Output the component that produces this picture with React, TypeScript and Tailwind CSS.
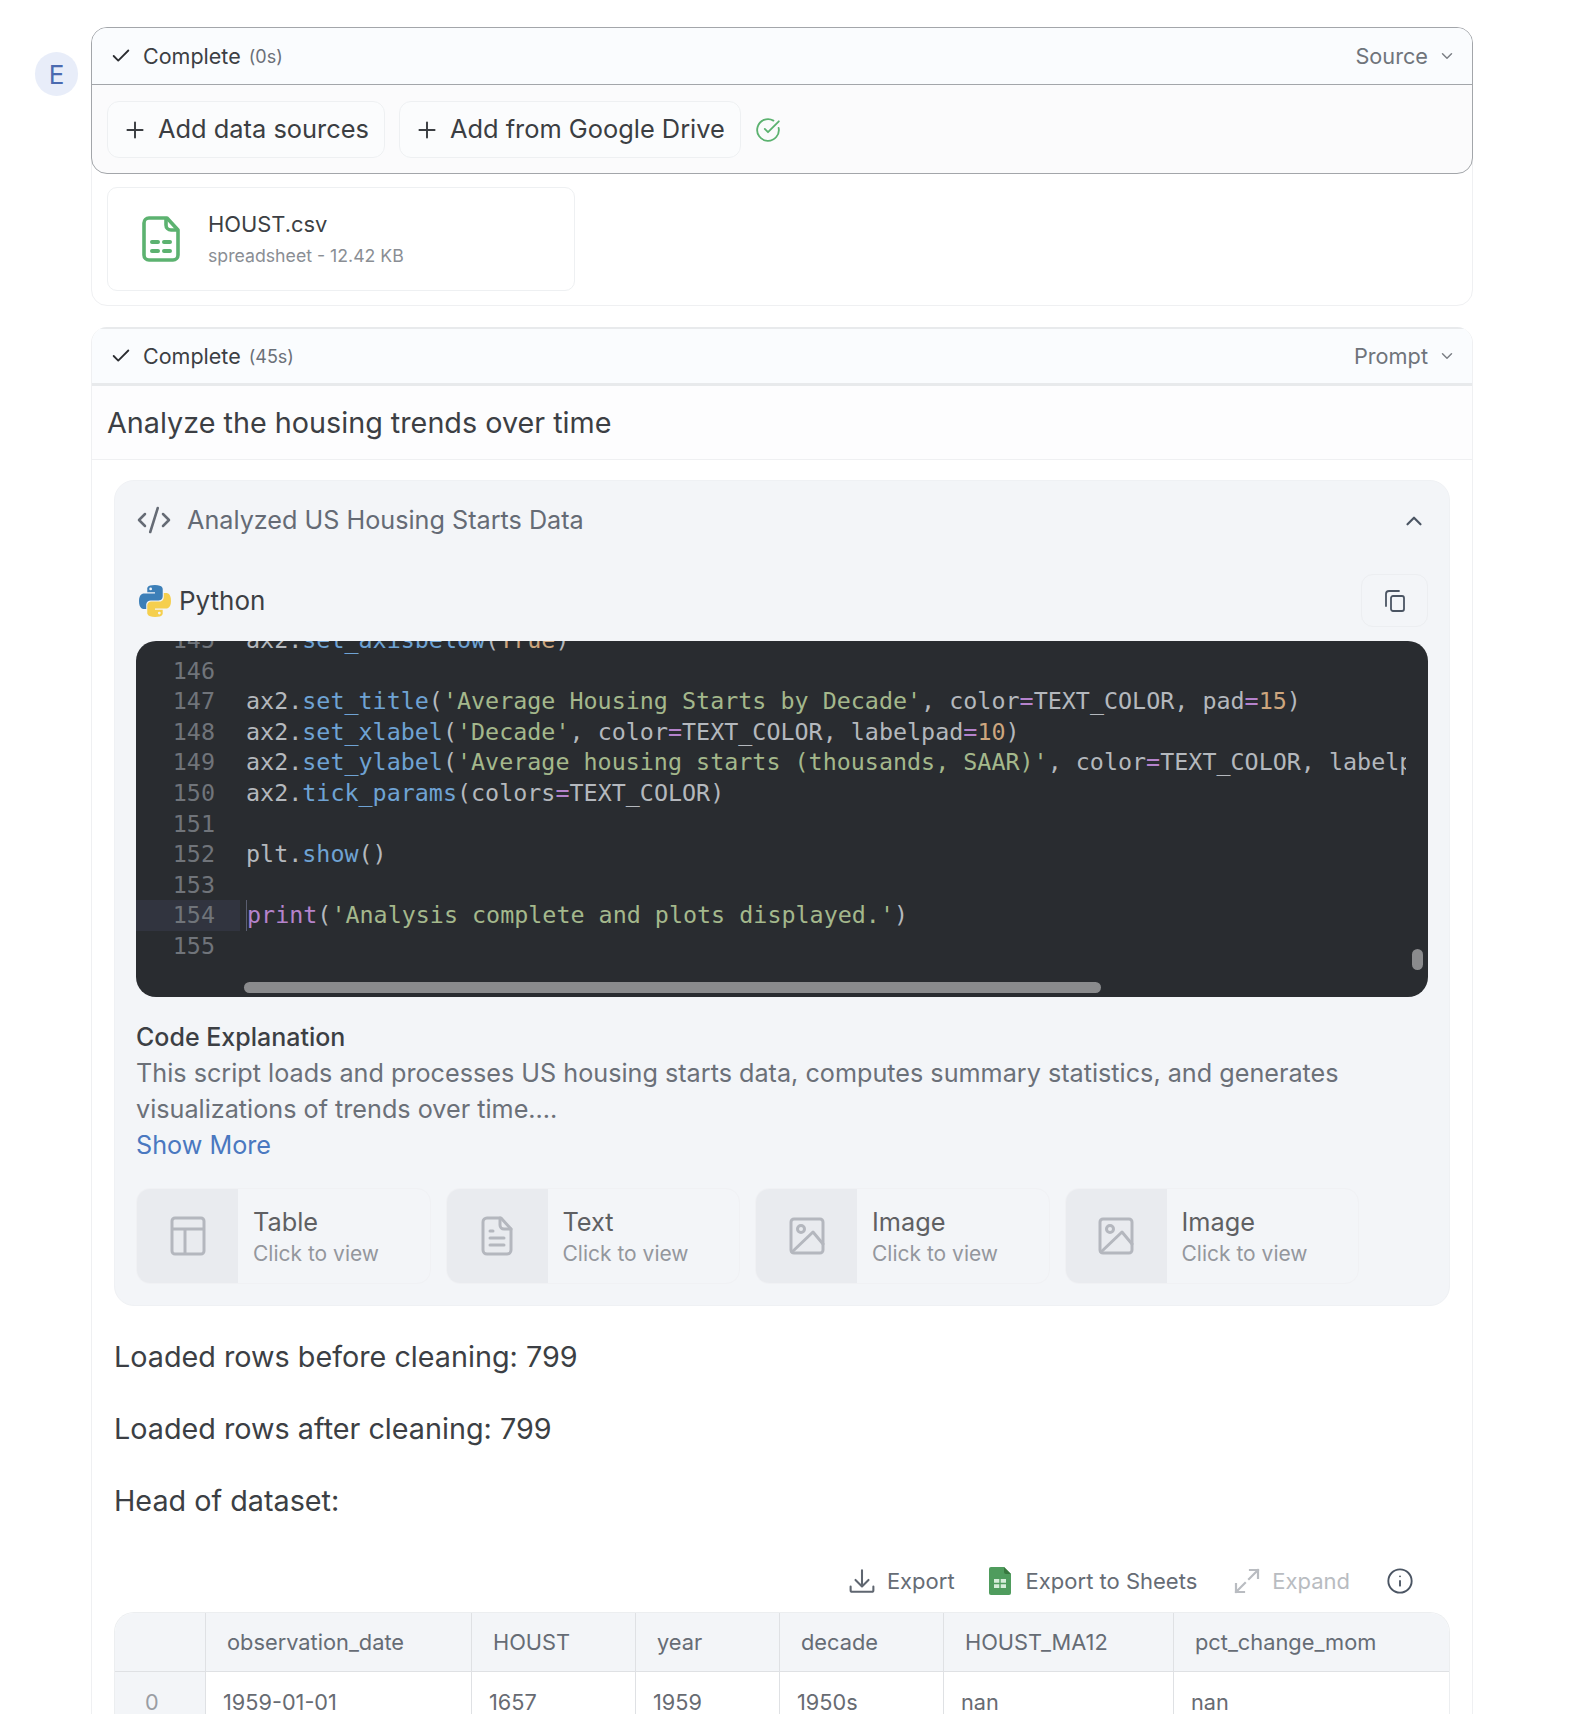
import { Check, ChevronDown, ChevronUp, CircleCheckBig, CodeXml, Info, Plus } from "lucide-react";
import type { ReactNode } from "react";

const ui = "font-['Inter',sans-serif]";

function Fn({ children }: { children: ReactNode }) {
    return <span className="text-[#6fa3d4]">{children}</span>;
}
function Str({ children }: { children: ReactNode }) {
    return <span className="text-[#a4b88c]">{children}</span>;
}
function Op({ children }: { children: ReactNode }) {
    return <span className="text-[#b583cc]">{children}</span>;
}
function Num({ children }: { children: ReactNode }) {
    return <span className="text-[#cda67e]">{children}</span>;
}

const lines: { n: number; code: ReactNode; active?: boolean }[] = [
    { n: 145, code: <>ax2.<Fn>set_axisbelow</Fn>(<Num>True</Num>)</> },
    { n: 146, code: null },
    { n: 147, code: <>ax2.<Fn>set_title</Fn>(<Str>'Average Housing Starts by Decade'</Str>, color<Op>=</Op>TEXT_COLOR, pad<Op>=</Op><Num>15</Num>)</> },
    { n: 148, code: <>ax2.<Fn>set_xlabel</Fn>(<Str>'Decade'</Str>, color<Op>=</Op>TEXT_COLOR, labelpad<Op>=</Op><Num>10</Num>)</> },
    { n: 149, code: <>ax2.<Fn>set_ylabel</Fn>(<Str>'Average housing starts (thousands, SAAR)'</Str>, color<Op>=</Op>TEXT_COLOR, labelpad<Op>=</Op><Num>10</Num>)</> },
    { n: 150, code: <>ax2.<Fn>tick_params</Fn>(colors<Op>=</Op>TEXT_COLOR)</> },
    { n: 151, code: null },
    { n: 152, code: <>plt.<Fn>show</Fn>()</> },
    { n: 153, code: null },
    { n: 154, code: <><Op>print</Op>(<Str>'Analysis complete and plots displayed.'</Str>)</>, active: true },
    { n: 155, code: null },
];

function CodeBlock() {
    return (
        <div className="relative mt-[14px] h-[356px] overflow-hidden rounded-[20px] bg-[#292c30] font-['DejaVu_Sans_Mono',monospace] text-[23.36px] text-[#b4b8bd]">
            <div className="-mt-[16px] flex">
                <div className="w-[104px] shrink-0 text-[#70747a]">
                    {lines.map((l) => (
                        <div key={l.n} className={`h-[30.6px] pr-[25px] text-right leading-[30.6px] ${l.active ? "bg-[#31343f]" : ""}`}>{l.n}</div>
                    ))}
                </div>
                <div className="ml-[6px] w-[1160px] overflow-hidden">
                    {lines.map((l) => (
                        <div key={l.n} className={`h-[30.6px] whitespace-pre leading-[30.6px] ${l.active ? "border-l border-[#5a5e70]" : ""}`}>{l.code}</div>
                    ))}
                </div>
            </div>
            <div className="absolute bottom-[4px] left-[108px] h-[11px] w-[857px] rounded-full bg-[#8a8b8d]" />
            <div className="absolute right-[5px] top-[308px] h-[21px] w-[11px] rounded-full bg-[#8a8b8d]" />
        </div>
    );
}

function PythonLogo() {
    return (
        <svg viewBox="2 2 28 28" className="h-[32px] w-[32px]">
            <path fill="#3c7fb8" d="M15.885 2.1c-7.1 0-6.651 3.07-6.651 3.07v3.19h6.752v1H6.545S2 8.8 2 16.005s4.013 6.912 4.013 6.912H8.33v-3.361s-.13-4.013 3.9-4.013h6.762s3.772.06 3.772-3.652V5.8s.572-3.712-6.842-3.712Zm-3.732 2.137a1.214 1.214 0 1 1-1.183 1.244v-.02a1.214 1.214 0 0 1 1.214-1.214Z" />
            <path fill="#f5cf4e" d="M16.085 29.91c7.1 0 6.651-3.08 6.651-3.08v-3.18h-6.751v-1h9.47S30 23.158 30 15.995s-4.013-6.912-4.013-6.912H23.67V12.4s.13 4.013-3.9 4.013h-6.765S9.234 16.356 9.234 20.068v6.142s-.573 3.7 6.851 3.7Zm3.732-2.147A1.214 1.214 0 1 1 21 26.519v.03a1.214 1.214 0 0 1-1.183 1.214Z" />
        </svg>
    );
}

function SheetFileIcon() {
    return (
        <svg viewBox="0 0 38 46" className="h-[46px] w-[38px]" fill="none" stroke="#5cb270" strokeWidth="3.6" strokeLinejoin="round">
            <path d="M7 2h18l11 12v25a5 5 0 0 1-5 5H7a5 5 0 0 1-5-5V7a5 5 0 0 1 5-5Z" />
            <path d="M24 2v7a5 5 0 0 0 5 5h7" />
            <path d="M10 26h6M22 26h6M10 35h6M22 35h6" strokeLinecap="round" strokeWidth="4" />
        </svg>
    );
}

function CopyIcon() {
    return (
        <svg viewBox="0 0 24 24" className="h-[24px] w-[24px]" fill="none" stroke="#4b5563" strokeWidth="1.8" strokeLinejoin="round" strokeLinecap="round">
            <rect x="8" y="7" width="13" height="15" rx="2" />
            <path d="M16 2H6a3 3 0 0 0-3 3v12" />
        </svg>
    );
}

function TableIcon() {
    return (
        <svg viewBox="0 0 36 40" className="h-[40px] w-[36px]" fill="none" stroke="#b4b7be" strokeWidth="3" strokeLinejoin="round">
            <rect x="2" y="2" width="32" height="36" rx="3" />
            <path d="M2 13h32M15 13v25" />
        </svg>
    );
}

function TextFileIcon() {
    return (
        <svg viewBox="0 0 32 40" className="h-[40px] w-[32px]" fill="none" stroke="#b4b7be" strokeWidth="3" strokeLinejoin="round" strokeLinecap="round">
            <path d="M6 2h14l10 11v21a4 4 0 0 1-4 4H6a4 4 0 0 1-4-4V6a4 4 0 0 1 4-4Z" />
            <path d="M19 2v7a4 4 0 0 0 4 4h7" />
            <path d="M9 15h3M9 22h14M9 29h14" />
        </svg>
    );
}

function ImageIcon() {
    return (
        <svg viewBox="0 0 36 38" className="h-[38px] w-[36px]" fill="none" stroke="#b4b7be" strokeWidth="3" strokeLinejoin="round" strokeLinecap="round">
            <rect x="2" y="2" width="32" height="34" rx="3" />
            <circle cx="12" cy="12" r="3.5" />
            <path d="M3 35 24 15l10 12" />
        </svg>
    );
}

function ExportIcon() {
    return (
        <svg viewBox="0 0 24 24" className="h-[26px] w-[26px]" fill="none" stroke="#5f6670" strokeWidth="1.9" strokeLinecap="round" strokeLinejoin="round">
            <path d="M12 2v14M6 11l6 6 6-6" />
            <path d="M1.5 17v3.5a1.5 1.5 0 0 0 1.5 1.5h18a1.5 1.5 0 0 0 1.5-1.5V17" />
        </svg>
    );
}

function SheetsIcon() {
    return (
        <svg viewBox="0 0 22 28" className="h-[28px] w-[22px]">
            <path fill="#4f9c5d" d="M2 0h13l7 7v19a2 2 0 0 1-2 2H2a2 2 0 0 1-2-2V2a2 2 0 0 1 2-2Z" />
            <path fill="#38783f" d="M15 0l7 7h-5a2 2 0 0 1-2-2Z" />
            <rect x="5" y="12" width="12" height="9" fill="#d6edd9" />
            <path stroke="#4f9c5d" strokeWidth="1.4" d="M11 12v9M5 16.5h12" />
        </svg>
    );
}

function ExpandIcon() {
    return (
        <svg viewBox="0 0 26 26" className="h-[26px] w-[26px]" fill="none" stroke="#b9bcc1" strokeWidth="2.2" strokeLinecap="square">
            <path d="M15 11l9-9M16 2h8v8" />
            <path d="M11 15l-9 9M2 16v8h8" />
        </svg>
    );
}

const outputs = [
    { label: "Table", icon: <TableIcon /> },
    { label: "Text", icon: <TextFileIcon /> },
    { label: "Image", icon: <ImageIcon /> },
    { label: "Image", icon: <ImageIcon /> },
];

function OutputCard({ label, icon }: { label: string; icon: ReactNode }) {
    return (
        <div className="flex h-[96px] w-[294.5px] overflow-hidden rounded-[14px] border border-[#f0f1f4]">
            <div className="flex w-[101px] shrink-0 items-center justify-center bg-[#e9ebef]">{icon}</div>
            <div className="flex flex-col justify-center pl-[15px] pt-[2px]">
                <div className="text-[25.3px] leading-[33px] text-[#5f6063]">{label}</div>
                <div className="text-[21px] leading-[31px] text-[#94979d]">Click to view</div>
            </div>
        </div>
    );
}

function StatusHeader({ time, right, strong }: { time: string; right: string; strong?: boolean }) {
    return (
        <div className={`flex items-center justify-between bg-[#fafcfe] pl-[18px] pr-[16px] ${strong ? "h-[57px] border-b border-[#a3a6aa]" : "box-content h-[54px] border-b-[3px] border-t-[2px] border-[#e8eaec]"}`}>
            <div className="flex items-center gap-[10px]">
                <Check className="h-[22px] w-[22px] text-[#2b2d31]" strokeWidth={2} />
                <span className="ml-[1px] text-[21.5px] text-[#3c3f44]">Complete</span>
                <span className="-ml-[2px] text-[18px] text-[#6b7078]">({time})</span>
            </div>
            <div className="flex items-center gap-[10px]">
                <span className="text-[21.7px] text-[#6f747b]">{right}</span>
                <ChevronDown className="h-[18px] w-[18px] text-[#7d8187]" strokeWidth={2} />
            </div>
        </div>
    );
}

function AddButton({ label }: { label: string }) {
    return (
        <button className="flex h-[57px] items-center gap-[10px] rounded-[12px] border border-[#eef0f2] bg-[#fbfcfd] pl-[14px] pr-[15px] text-[25.4px] text-[#3b3e42]">
            <Plus className="h-[26px] w-[26px]" strokeWidth={1.8} />
            {label}
        </button>
    );
}

const headers = ["", "observation_date", "HOUST", "year", "decade", "HOUST_MA12", "pct_change_mom"];
const row = ["0", "1959-01-01", "1657", "1959", "1950s", "nan", "nan"];

function DataTable() {
    return (
        <div className="mt-[11px] overflow-hidden rounded-t-[20px] border-x border-t border-[#eceef0]">
            <div className="grid h-[59px] grid-cols-[90px_266px_164px_144px_164px_230px_1fr] border-b border-[#dfe1e4] bg-[#f3f5f8] text-[21.8px] text-[#666c75]">
                {headers.map((h, i) => (
                    <div key={i} className={`flex items-center pl-[21px] ${i > 0 ? "border-l border-[#dfe1e4]" : ""}`}>{h}</div>
                ))}
            </div>
            <div className="grid h-[60px] grid-cols-[90px_266px_164px_144px_164px_230px_1fr] text-[21.7px] text-[#676b72]">
                {row.map((c, i) => (
                    <div key={i} className={`flex items-center ${i === 0 ? "bg-[#f3f5f8] pl-[30px] text-[#9a9da3]" : "border-l border-[#dfe1e4] pl-[17px]"}`}>{c}</div>
                ))}
            </div>
        </div>
    );
}

export default function App() {
    return (
        <div className={`h-[1714px] overflow-hidden bg-white ${ui}`}>
            <div className="flex items-start gap-[13px] pl-[35px] pt-[27px]">
                <div className="mt-[25px] flex h-[44px] w-[43px] shrink-0 items-center justify-center rounded-full bg-[#e8edf9] text-[26px] text-[#4a6ab0]">E</div>
                <div className="w-[1382px]">
                    <section className="h-[279px] rounded-[16px] border border-[#eff0f2]">
                        <div className="-m-px h-[147px] overflow-hidden rounded-[16px] border border-[#a3a6aa] bg-[#fbfbfc]">
                            <StatusHeader time="0s" right="Source" strong />
                            <div className="flex items-center gap-[14px] px-[15px] pt-[16px]">
                                <AddButton label="Add data sources" />
                                <AddButton label="Add from Google Drive" />
                                <CircleCheckBig className="h-[26px] w-[26px] text-[#5cb270]" strokeWidth={1.7} />
                            </div>
                        </div>
                        <div className="ml-[15px] mt-[14px] flex h-[104px] w-[468px] items-center rounded-[10px] border border-[#eef0f2] pl-[34px]">
                            <SheetFileIcon />
                            <div className="ml-[28px]">
                                <div className="text-[21.9px] leading-[30px] text-[#3c3f44]">HOUST.csv</div>
                                <div className="mt-[4px] text-[17.7px] leading-[26px] text-[#8a8e94]">spreadsheet - 12.42 KB</div>
                            </div>
                        </div>
                    </section>

                    <section className="mt-[21px] overflow-hidden rounded-t-[16px] border-x border-[#eff0f2]">
                        <StatusHeader time="45s" right="Prompt" />
                        <div className="flex h-[74px] items-center border-b border-[#eff0f2] bg-[#fdfdfe] pl-[15px] text-[28.75px] text-[#3c3f44]">
                            Analyze the housing trends over time
                        </div>
                        <div className="px-[22px] pt-[20px]">
                            <div className="rounded-[20px] border border-[#eff1f4] bg-[#f3f5f8] px-[21px] pb-[21px]">
                                <div className="flex h-[79px] items-center justify-between">
                                    <div className="flex items-center gap-[15px] text-[25.2px] text-[#656b75]">
                                        <CodeXml className="h-[36px] w-[36px]" strokeWidth={1.7} />
                                        Analyzed US Housing Starts Data
                                    </div>
                                    <ChevronUp className="mr-[1px] h-[26px] w-[26px] text-[#4b5563]" strokeWidth={2} />
                                </div>
                                <div className="mt-[14px] flex h-[53px] items-center justify-between">
                                    <div className="flex items-center gap-[8px] pl-[3px] text-[26px] text-[#3c3f44]">
                                        <PythonLogo />
                                        Python
                                    </div>
                                    <button className="flex h-[53px] w-[67px] items-center justify-center rounded-[12px] border border-[#eceef1]">
                                        <CopyIcon />
                                    </button>
                                </div>
                                <CodeBlock />
                                <div className="mt-[22px] text-[25px] font-medium leading-[36px] text-[#3c3f44]">Code Explanation</div>
                                <p className="text-[25.2px] leading-[36px] text-[#6b7078]">
                                    This script loads and processes US housing starts data, computes summary statistics, and generates visualizations of trends over time....
                                </p>
                                <div className="text-[25.2px] leading-[36px] text-[#4a78c0]">Show More</div>
                                <div className="mt-[25px] flex gap-[15px]">
                                    {outputs.map((o, i) => (
                                        <OutputCard key={i} label={o.label} icon={o.icon} />
                                    ))}
                                </div>
                            </div>

                            <div className="mt-[33px] flex flex-col gap-[36px] text-[28.75px] leading-[36px] text-[#3c3f44]">
                                <p>Loaded rows before cleaning: 799</p>
                                <p>Loaded rows after cleaning: 799</p>
                                <p>Head of dataset:</p>
                            </div>

                            <div className="mt-[42px] flex h-[40px] items-center justify-end pr-[36px] text-[22px]">
                                <div className="flex items-center gap-[12px] text-[#666c75]">
                                    <ExportIcon />
                                    Export
                                </div>
                                <div className="ml-[34px] flex items-center gap-[15px] text-[#666c75]">
                                    <SheetsIcon />
                                    Export to Sheets
                                </div>
                                <div className="ml-[37px] flex items-center gap-[12px] text-[#b9bcc1]">
                                    <ExpandIcon />
                                    Expand
                                </div>
                                <Info className="ml-[36px] h-[28px] w-[28px] text-[#4b5563]" strokeWidth={1.6} />
                            </div>

                            <DataTable />
                        </div>
                    </section>
                </div>
            </div>
        </div>
    );
}
